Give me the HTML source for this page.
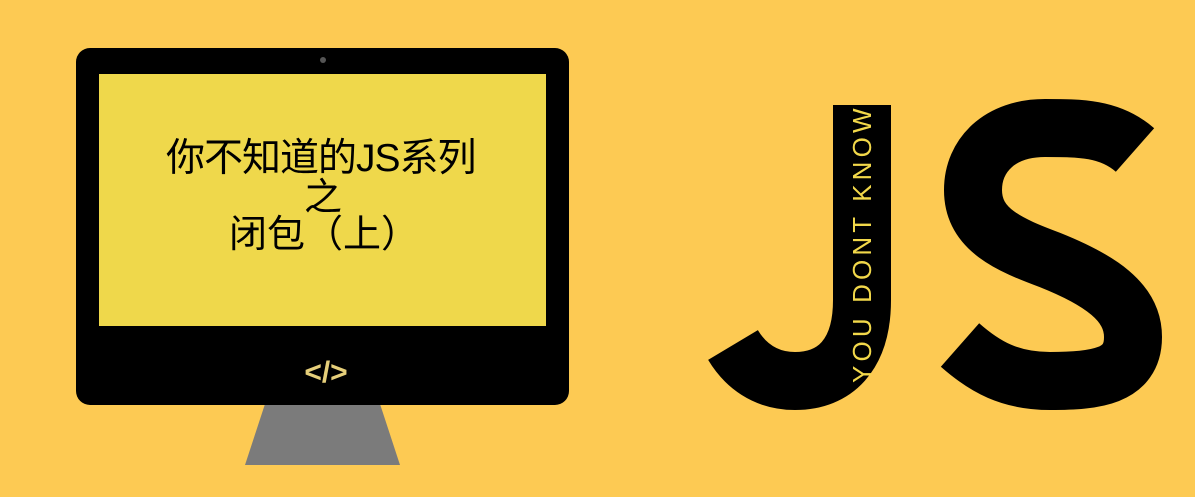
<!DOCTYPE html>
<html><head><meta charset="utf-8"><style>
html,body{margin:0;padding:0}
body{width:1195px;height:497px;background:#fdca53;position:relative;overflow:hidden;font-family:"Liberation Sans","Noto Sans CJK SC",sans-serif}
.t{position:absolute;color:#000;white-space:nowrap;font-family:"Liberation Sans","Noto Sans CJK SC",sans-serif}
</style></head><body>
<svg width="1195" height="497" style="position:absolute;left:0;top:0">
<polygon points="265,404 380,404 400,465 245,465" fill="#7b7b7b"/>
<rect x="76" y="48" width="493" height="357" rx="14" fill="#000"/>
<rect x="99" y="74" width="447" height="252" fill="#efd84b"/>
<circle cx="323" cy="60" r="3" fill="#555"/>
<text x="326" y="382" text-anchor="middle" font-family="Liberation Sans" font-weight="bold" font-size="30" fill="#e6cf7a">&lt;/&gt;</text>
<path d="M862 105 V300 C862 355 835 381 795 381 C765 381 745 365 733 345" stroke="#000" stroke-width="58" fill="none"/>
<path d="M1135 150 C1110 128 1080 128 1045 128 C1000 128 973 155 973 190 C973 230 1010 245 1050 260 C1100 280 1133 302 1133 337 C1133 377 1095 381 1050 381 C1010 381 985 367 960 345" stroke="#000" stroke-width="58" fill="none"/>
<text transform="translate(871,383) rotate(-90)" font-family="Liberation Sans" font-size="26" letter-spacing="2.5" fill="#f2d84a" textLength="277">YOU DONT KNOW</text>
</svg>
<div class="t" style="left:166px;top:137px;font-size:39px;line-height:44px;letter-spacing:-1px">你不知道的JS系列</div>
<div class="t" style="left:304px;top:177px;font-size:38px;line-height:42px">之</div>
<div class="t" style="left:229px;top:214px;font-size:38px;line-height:42px">闭包（上）</div>
</body></html>
